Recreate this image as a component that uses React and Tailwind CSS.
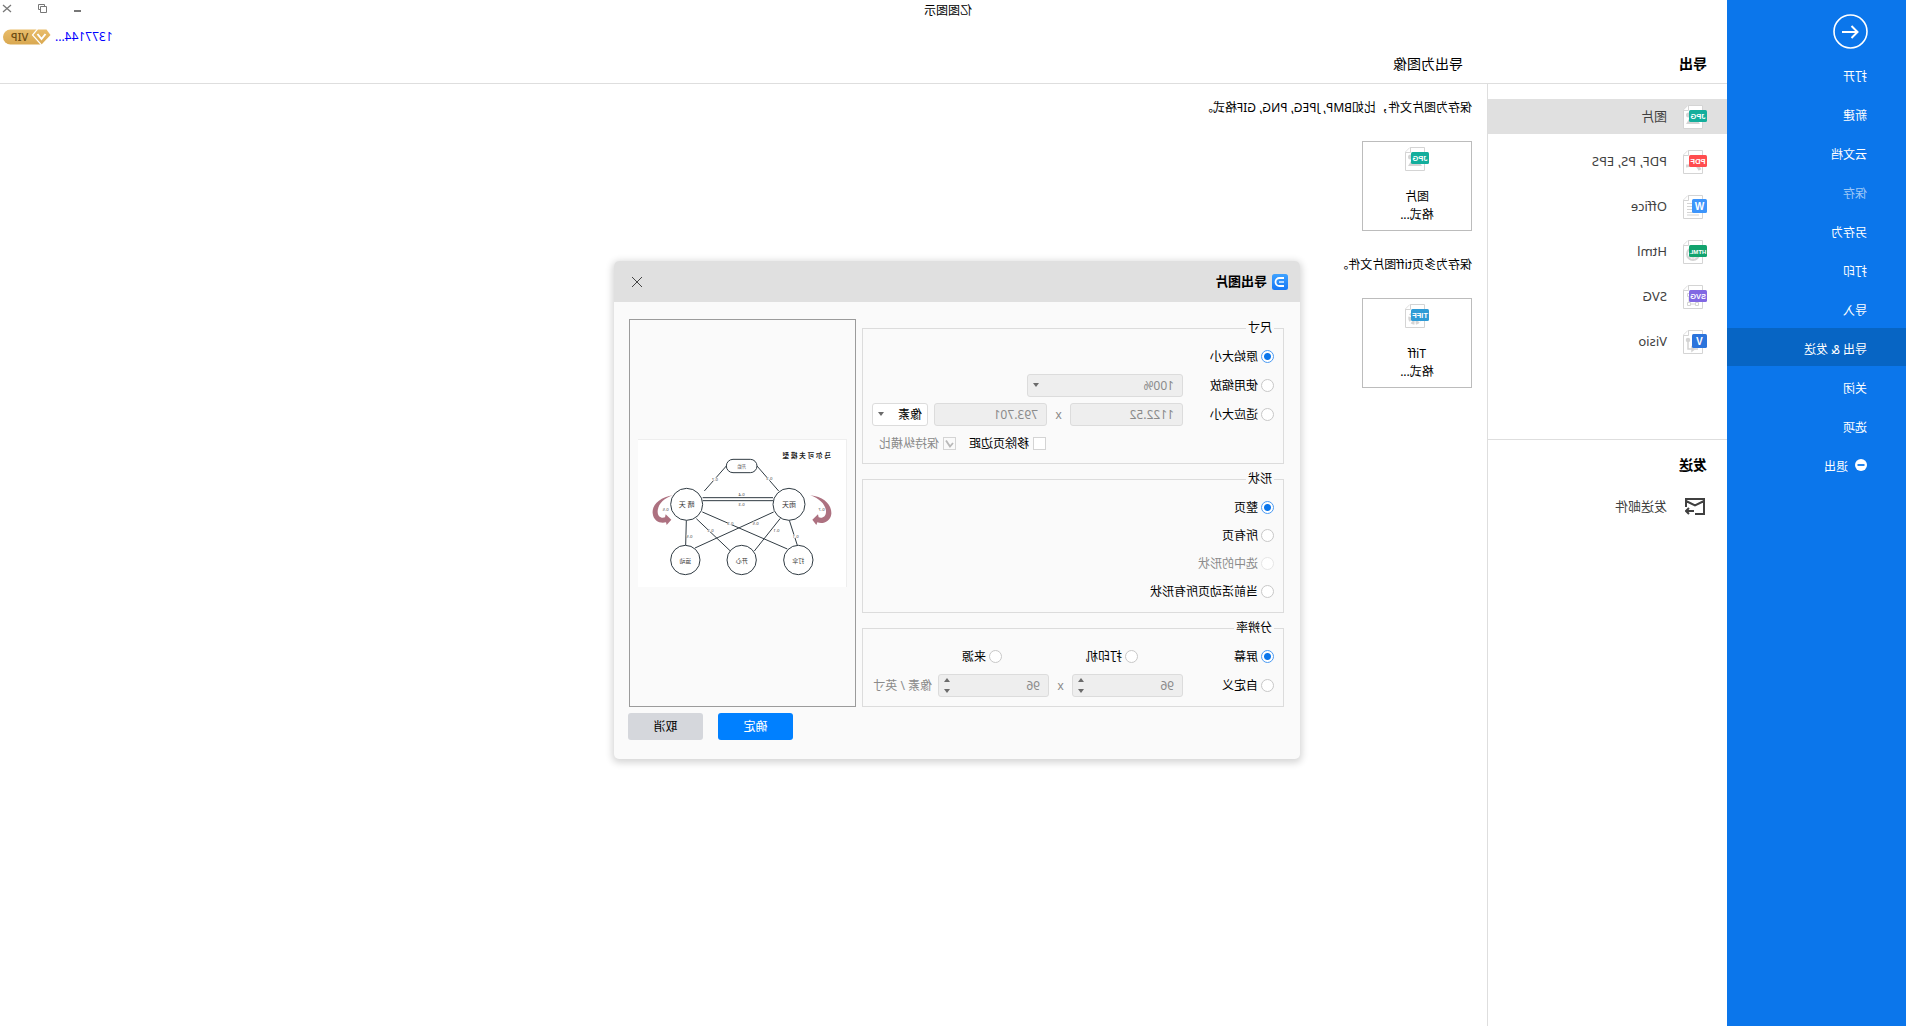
import { useState } from "react"

const menuItems = [
  { label: "打开" },
  { label: "新建" },
  { label: "云文档" },
  { label: "保存", disabled: true },
  { label: "另存为" },
  { label: "打印" },
  { label: "导入" },
  { label: "导出 & 发送", active: true },
  { label: "关闭" },
  { label: "选项" }
]

const exportTypes = [
  { label: "图片", tag: "JPG", color: "#13ae9c", art: "photo" },
  { label: "PDF, PS, EPS", tag: "PDF", color: "#ff4d4f", art: "pdf" },
  { label: "Office", tag: "W", color: "#3d95fb", art: "lines" },
  { label: "Html", tag: "HTML", color: "#12a36e", art: "globe" },
  { label: "SVG", tag: "SVG", color: "#8168e3", art: "nodes" },
  { label: "Visio", tag: "V", color: "#2b74dc", art: "flow" }
]

// Faint drawing on the sheet, behind the coloured tag
function FileArt({ art }) {
  if (art === "photo") {
    return (
      <g fill="#d4d4d4">
        <circle cx="18.5" cy="10" r="2.5" />
        <path d="M7 19l5-7 4 4 2-2 3 5z" />
      </g>
    )
  }
  if (art === "pdf") {
    return <path d="M7 20c2-4 5-6 6-9 1 4 4 5 8 5" fill="none" stroke="#d4d4d4" strokeWidth="3" />
  }
  if (art === "lines") {
    return <path d="M15 8.5h5M15 11.5h5M15 14.5h5M8 17.5h12M8 20h12" stroke="#d4d4d4" strokeWidth="1" />
  }
  if (art === "globe") {
    return (
      <g fill="none" stroke="#d4d4d4">
        <circle cx="14" cy="14" r="6" strokeWidth="2" />
        <path d="M8 17h12M14 8v12" />
      </g>
    )
  }
  if (art === "nodes") {
    return (
      <path
        d="M8.5 17.5h3v3h-3zM16.5 17.5h3v3h-3zM16.5 8.5h3v3h-3zM11.5 19h5M18 11.5v6M10 11.5v6"
        fill="none"
        stroke="#d4d4d4"
      />
    )
  }
  if (art === "gear") {
    return <circle cx="14" cy="14" r="5" fill="none" stroke="#d4d4d4" strokeWidth="3.5" strokeDasharray="3 1.2" />
  }
  return (
    <g fill="none" stroke="#d4d4d4" strokeWidth="1.5">
      <path d="M19 10v9h-4M12 19H9" />
      <circle cx="19" cy="10" r="1.5" fill="#d4d4d4" />
      <path d="M12.5 19l2.5-2v4z" fill="#d4d4d4" />
    </g>
  )
}

function FileIcon({ tag, color, art }) {
  const single = tag.length === 1
  return (
    <svg width="24" height="24" viewBox="0 0 24 24" className="shrink-0 font-['Liberation_Sans',sans-serif]">
      <path d="M4.5.5H19L23.5 5v18.5h-19z" fill="#fff" stroke="#d4d4d4" />
      <FileArt art={art} />
      <path d="M18.5.5v5h5" fill="#fff" stroke="#d4d4d4" />
      {single ? (
        <rect y="4" width="15" height="14" rx="1.5" fill={color} />
      ) : (
        <rect y="5" width="18" height="12" rx="1.5" fill={color} />
      )}
      <text
        x={single ? 7.5 : 9}
        y={single ? 14.5 : 14}
        textAnchor="middle"
        fontSize={single ? 10 : tag === "HTML" ? 6 : 7.5}
        fontWeight="700"
        fill="#fff"
      >
        {tag}
      </text>
    </svg>
  )
}

function Caret({ up }) {
  return (
    <svg width="6" height="4" viewBox="0 0 6 4" className="block">
      <path d={up ? "M0 4l3-4 3 4z" : "M0 0l3 4 3-4z"} fill="#6b6b6b" />
    </svg>
  )
}

function Radio({ name, label, checked, disabled, onChange, className = "" }) {
  return (
    <label className={`flex h-[23px] shrink-0 items-center gap-[3px] ${disabled ? "text-[#8a8a8a]" : ""} ${className}`}>
      <input
        type="radio"
        name={name}
        checked={checked}
        disabled={disabled}
        onChange={onChange}
        className="size-[13px] appearance-none rounded-full border border-[#c8c8c8] bg-white checked:border-[#4b9bf3] checked:bg-[radial-gradient(circle,#0b76eb_2px,#0b76eb_3px,#fff_4px)] disabled:border-[#e6e6e6]"
      />
      {label}
    </label>
  )
}

function CheckBox({ label, checked, disabled, onChange }) {
  return (
    <label className={`flex shrink-0 items-center gap-1 whitespace-nowrap ${disabled ? "text-[#8a8a8a]" : ""}`}>
      <span className="relative size-[13px] shrink-0">
        <input
          type="checkbox"
          checked={checked}
          disabled={disabled}
          onChange={onChange}
          className="block size-[13px] appearance-none border border-[#d4d4d4] bg-white disabled:bg-[#fafafa]"
        />
        {checked && (
          <svg viewBox="0 0 13 13" className="pointer-events-none absolute inset-0">
            <path d="M3 6l3 3.5 4-6" fill="none" stroke="#b8b8b8" strokeWidth="1.8" />
          </svg>
        )}
      </span>
      {label}
    </label>
  )
}

function Select({ label, value, disabled, className = "" }) {
  return (
    <div className={`relative shrink-0 ${className}`}>
      <select
        aria-label={label}
        defaultValue={value}
        disabled={disabled}
        className="h-[23px] w-full appearance-none rounded-[3px] border border-[#dcdcdc] bg-white pl-[5px] disabled:bg-[#eeeeee] disabled:pl-2 disabled:text-[#8a8a8a] disabled:opacity-100"
      >
        <option>{value}</option>
      </select>
      <span className="pointer-events-none absolute top-[9px] right-1.5">
        <Caret />
      </span>
    </div>
  )
}

function NumberBox({ label, value, spin, className = "" }) {
  return (
    <div className={`relative shrink-0 ${className}`}>
      <input
        aria-label={label}
        defaultValue={value}
        disabled
        className="block h-[23px] w-full rounded-[3px] border border-[#dcdcdc] bg-[#eeeeee] pl-2 text-[#8a8a8a]"
      />
      {spin && (
        <span className="absolute inset-y-0 right-1.5 flex flex-col justify-center gap-[7px]">
          <button disabled aria-label={`${label} +`}>
            <Caret up />
          </button>
          <button disabled aria-label={`${label} -`}>
            <Caret />
          </button>
        </span>
      )}
    </div>
  )
}

function Group({ title, className = "", children }) {
  return (
    <fieldset className={`flex min-w-0 flex-col border border-[#dcdcdc] pt-2 pr-2 pl-[9px] ${className}`}>
      <legend className="px-0.5 leading-[18px]">{title}</legend>
      {children}
    </fieldset>
  )
}

const links = [
  "M359 78L425 153",
  "M267 78L202 153",
  "M219 173H430",
  "M219 182H430",
  "M431 216L176 327",
  "M449 236L347 333",
  "M479 241L481 316",
  "M217 216L453 324",
  "M197 235L275 333",
  "M170 241L146 316"
]

const weights = [
  [393, 118, "0.7"],
  [230, 116, "0.3"],
  [313, 163, "0.4"],
  [313, 194, "0.3"],
  [541, 208, "0.5"],
  [73, 208, "0.7"],
  [347, 250, "0.3"],
  [271, 250, "0.5"],
  [406, 271, "0.3"],
  [209, 271, "0.1"],
  [470, 289, "0.5"],
  [151, 289, "0.1"]
]

const states = [
  [171, 193, 48, "雨天", 21],
  [478, 193, 48, "晴 天", 21],
  [143, 360, 44, "打伞", 18],
  [313, 360, 44, "开心", 18],
  [482, 360, 44, "运动", 17]
]

function MarkovDiagram() {
  return (
    <svg viewBox="0 0 624 440" className="w-full border-t border-l border-[#eeeeee] bg-white">
      <text x="45" y="55" fontSize="20" fontWeight="700" fill="#222">
        马 尔 可 夫 模 型
      </text>
      <g stroke="#2f3a42" strokeWidth="3" fill="none">
        {links.map((d) => (
          <path key={d} d={d} />
        ))}
      </g>
      {weights.map(([x, y, value]) => (
        <g key={`${x}-${y}`}>
          <rect x={x - 8} y={y - 5} width="16" height="10" fill="#fff" />
          <text x={x} y={y + 5} fontSize="13" textAnchor="middle" fill="#444">
            {value}
          </text>
        </g>
      ))}
      <g fill="#fff" stroke="#2f3a42" strokeWidth="3">
        <rect x="267" y="58" width="92" height="40" rx="20" />
        {states.map(([x, y, r]) => (
          <circle key={`${x}-${y}`} cx={x} cy={y} r={r} />
        ))}
      </g>
      <text x="313" y="84" fontSize="13" textAnchor="middle" fill="#444">
        开始
      </text>
      {states.map(([x, y, , name, size]) => (
        <text key={name} x={x} y={y + 8} fontSize={size} textAnchor="middle" fill="#333">
          {name}
        </text>
      ))}
      <path d="M518 166C560 172 583 196 580 220C578 244 556 252 540 247L538 255L524 239L541 223L543 232C556 236 566 228 565 212C562 190 546 174 518 166z" fill="#ad7180" />
      <path d="M107 166C65 170 42 196 44 222C47 246 70 253 86 247L89 255L101 239L84 223L82 232C69 236 59 228 60 212C63 192 79 176 107 166z" fill="#ad7180" />
    </svg>
  )
}

function ExportDialog() {
  const [size, setSize] = useState("原始大小")
  const [shape, setShape] = useState("整页")
  const [dpi, setDpi] = useState("屏幕")
  const [trim, setTrim] = useState(false)

  const radio = (name, label, value, setValue, extra) => (
    <Radio key={label} name={name} label={label} checked={value === label} onChange={() => setValue(label)} {...extra} />
  )

  return (
    <div role="dialog" aria-label="导出图片" className="w-[686px] rounded-[5px] bg-[#fafafa] shadow-[0_2px_7px_2px_rgba(0,0,0,0.16)]">
      <header className="flex h-[41px] items-center gap-[5px] rounded-t-[5px] bg-[#e0e0e0] pr-[18px] pl-3">
        <svg width="16" height="16" viewBox="0 0 16 16">
          <defs>
            <linearGradient id="logo" x1="0" y1="0" x2="0" y2="1">
              <stop offset="0" stopColor="#3fa2ff" />
              <stop offset="1" stopColor="#1677f5" />
            </linearGradient>
          </defs>
          <rect width="16" height="16" rx="2.5" fill="url(#logo)" />
          <path d="M4 4h4.500a4 4 0 010 8H4" fill="none" stroke="#fff" strokeWidth="1.8" />
          <path d="M4 8h5" stroke="#fff" strokeWidth="1.3" />
        </svg>
        <h2 className="flex-1 text-[13px] font-bold">导出图片</h2>
        <button aria-label="关闭">
          <svg width="10" height="10" viewBox="0 0 10 10" stroke="#444">
            <path d="M0 0l10 10M10 0L0 10" />
          </svg>
        </button>
      </header>

      <div className="flex gap-1.5 pt-[17px] pr-[15px] pl-4">
        <div className="flex w-[422px] flex-col gap-1.5">
          <Group title="尺寸" className="gap-1.5 pb-2">
            {radio("size", "原始大小", size, setSize)}
            <div className="flex">
              {radio("size", "使用缩放", size, setSize, { className: "w-[91px]" })}
              <Select label="缩放" value="100%" disabled className="w-[156px]" />
            </div>
            <div className="flex items-center">
              {radio("size", "适应大小", size, setSize, { className: "w-[91px]" })}
              <NumberBox label="宽" value="1122.52" className="w-[113px]" />
              <span className="w-[23px] text-center text-[#8a8a8a]">x</span>
              <NumberBox label="高" value="793.701" className="w-[113px]" />
              <Select label="单位" value="像素" className="ml-1.5 w-14" />
            </div>
            <div className="flex h-[23px] gap-[13px] pl-[228px]">
              <CheckBox label="移除页边距" checked={trim} onChange={() => setTrim(!trim)} />
              <CheckBox label="保持纵横比" checked disabled />
            </div>
          </Group>

          <Group title="形状" className="gap-[5px] pb-[9px]">
            {radio("shape", "整页", shape, setShape)}
            {radio("shape", "所有页", shape, setShape)}
            {radio("shape", "选中的形状", shape, setShape, { disabled: true })}
            {radio("shape", "当前活动页所有形状", shape, setShape)}
          </Group>

          <Group title="分辨率" className="gap-1.5 pb-[9px]">
            <div className="flex">
              {radio("dpi", "屏幕", dpi, setDpi, { className: "w-[136px]" })}
              {radio("dpi", "打印机", dpi, setDpi, { className: "w-[136px]" })}
              {radio("dpi", "来源", dpi, setDpi)}
            </div>
            <div className="flex items-center text-[#8a8a8a]">
              {radio("dpi", "自定义", dpi, setDpi, { className: "w-[91px] text-black" })}
              <NumberBox spin label="水平" value="96" className="w-[111px]" />
              <span className="w-[23px] text-center">x</span>
              <NumberBox spin label="垂直" value="96" className="w-[111px]" />
              <span className="ml-1.5 whitespace-nowrap">像素 / 英寸</span>
            </div>
          </Group>
        </div>

        <div className="flex flex-1 items-center border border-[#9b9b9b] px-2">
          <MarkovDiagram />
        </div>
      </div>

      <footer className="flex justify-end gap-[15px] pt-1.5 pr-[14px] pb-[19px]">
        <button className="h-[27px] w-[75px] rounded-[3px] bg-[#0080ff] text-white">确定</button>
        <button className="h-[27px] w-[75px] rounded-[3px] bg-[#d5d7dc]">取消</button>
      </footer>
    </div>
  )
}

function Sidebar() {
  return (
    <nav className="flex w-[179px] shrink-0 flex-col bg-[#0b76eb] text-white">
      <button aria-label="返回" className="mt-[14px] mb-1.5 ml-[38px] size-[35px]">
        <svg width="35" height="35" viewBox="0 0 35 35" fill="none" stroke="#fff" strokeWidth="1.6">
          <circle cx="17.5" cy="17.5" r="16.5" />
          <path d="M26 18H11M16.5 12l-6 6 6 6" strokeWidth="2" />
        </svg>
      </button>
      {menuItems.map((item) => (
        <a
          key={item.label}
          href="#"
          className={`mb-px flex h-[38px] items-center pt-1.5 pl-[39px] ${item.active ? "bg-[#0765c4]" : ""} ${item.disabled ? "text-white/60" : ""}`}
        >
          {item.label}
        </a>
      ))}
      <a href="#" className="flex h-[38px] items-center gap-[7px] pt-1.5 pl-[39px]">
        <svg width="12" height="12" viewBox="0 0 12 12" className="mb-1">
          <circle cx="6" cy="6" r="6" fill="#fff" />
          <path d="M2.5 6h7" stroke="#0b76eb" strokeWidth="1.8" />
        </svg>
        退出
      </a>
    </nav>
  )
}

function ExportCard({ name, icon }) {
  return (
    <button className="mt-6 flex h-[90px] w-[110px] flex-col items-center border border-[#bcbcbc] pt-[5px]">
      <FileIcon {...icon} />
      <span className="mt-[17px] leading-[18px]">{name}</span>
      <span className="leading-[18px]">格式...</span>
    </button>
  )
}

export default function App() {
  return (
    <div className="relative flex min-h-screen -scale-x-100 bg-white font-['Noto_Sans','Noto_Sans_CJK_SC',sans-serif] text-xs text-black [font-kerning:none]">
      <Sidebar />

      <div className="flex flex-1 flex-col">
        <header className="relative h-[84px] border-b border-[#dedede]">
          <div className="flex pt-[54px] text-sm leading-5">
            <h1 className="w-[264px] pl-5 font-bold">导出</h1>
            <h2>导出为图像</h2>
          </div>
          <div className="absolute top-1 left-[755px] leading-[14px]">亿图图示</div>
          <div className="absolute top-0.5 right-0.5 flex items-center gap-6">
            <button aria-label="最小化" className="size-[11px]">
              <svg width="11" height="11" viewBox="0 0 11 11">
                <path d="M2 9h7" stroke="#777" strokeWidth="2" />
              </svg>
            </button>
            <button aria-label="还原" className="size-[11px]">
              <svg width="11" height="11" viewBox="0 0 11 11" fill="none" stroke="#777">
                <path d="M1.500 4.500h6v6h-6zM3.500 4V2.500h6v5H8" />
              </svg>
            </button>
            <button aria-label="关闭" className="size-[11px]">
              <svg width="11" height="11" viewBox="0 0 11 11" stroke="#777" strokeWidth="1.3">
                <path d="M2 3l8 7M10 3L2 10" />
              </svg>
            </button>
          </div>
          <div className="absolute top-7 right-0.5 flex items-center gap-1">
            <a href="#" className="leading-[17px] text-[#0000ff]">
              1377144...
            </a>
            <svg width="49" height="16" viewBox="0 0 48 16">
              <defs>
                <linearGradient id="gold" x1="0" y1="0" x2="0" y2="1">
                  <stop offset="0" stopColor="#e9bd6b" />
                  <stop offset="1" stopColor="#d9a850" />
                </linearGradient>
              </defs>
              <path d="M4 .5h36a7.5 7.5 0 010 15H9L0 6z" fill="url(#gold)" />
              <path d="M13 0l5 6-9 10" fill="none" stroke="#fff" strokeWidth="1.2" />
              <path d="M5 5l4 5 4-5" fill="none" stroke="#fff" strokeWidth="2" />
              <text x="31" y="12" fontSize="11" fontWeight="500" textAnchor="middle" fill="#6b4a12">
                VIP
              </text>
            </svg>
          </div>
        </header>

        <div className="flex flex-1">
          <aside className="w-60 shrink-0 border-r border-[#dedede] text-[13px] text-[#404040]">
            <ul className="flex h-[356px] flex-col gap-[10px] border-b border-[#dedede] pt-[15px]">
              {exportTypes.map(({ label, ...icon }, i) => (
                <li key={label}>
                  <a href="#" className={`flex h-[35px] items-center gap-4 pl-5 ${i === 0 ? "bg-[#e0e0e0]" : ""}`}>
                    <FileIcon {...icon} />
                    {label}
                  </a>
                </li>
              ))}
            </ul>
            <h3 className="mt-[15px] pl-5 text-sm leading-5 font-bold text-black">发送</h3>
            <a href="#" className="mt-[14px] flex h-[35px] items-center gap-[18px] pl-[22px]">
              <svg width="20" height="17" viewBox="0 0 20 17" fill="none" stroke="#404040" strokeWidth="2">
                <path d="M10 16H1V1h18v8M1 3l9 4.5L19 3M11 13h8M16 10l3 3-3 3" />
              </svg>
              发送邮件
            </a>
          </aside>

          <main className="flex-1 pt-[15px] pl-[15px]">
            <section>
              <p className="leading-[18px]">保存为图片文件，比如BMP, JPEG, PNG, GIF格式。</p>
              <ExportCard name="图片" icon={exportTypes[0]} />
            </section>
            <section className="mt-[25px]">
              <p className="leading-[18px]">保存为多页tiff图片文件。</p>
              <ExportCard name="Tiff" icon={{ tag: "TIFF", color: "#2f9bd6", art: "gear" }} />
            </section>
          </main>
        </div>
      </div>

      <div className="absolute inset-0 flex items-center justify-center pr-2 pb-1.5">
        <ExportDialog />
      </div>
    </div>
  )
}
